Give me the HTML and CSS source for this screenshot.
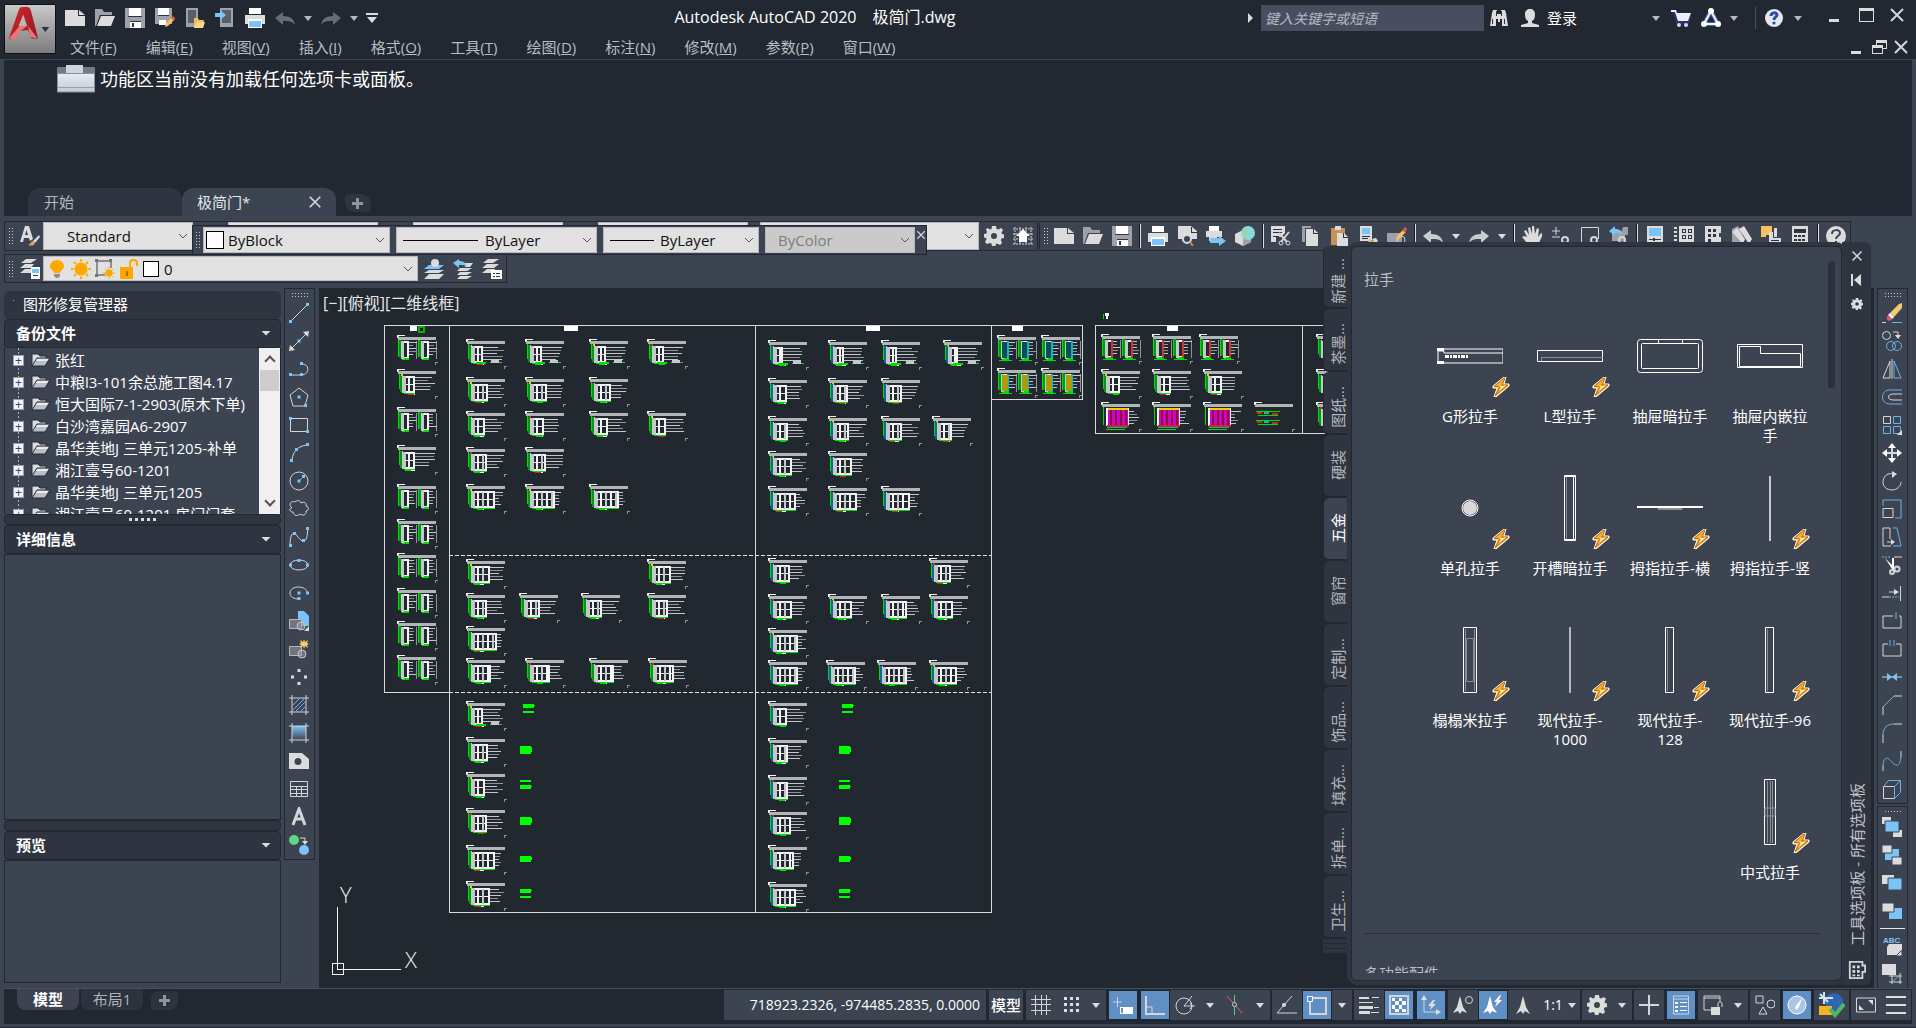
FILE: index.html
```html
<!DOCTYPE html>
<html lang="zh-CN">
<head>
<meta charset="utf-8">
<title>Autodesk AutoCAD 2020 极简门.dwg</title>
<link rel="stylesheet" href="styles.css">
</head>
<body>
<svg class="sprite" aria-hidden="true">
  <linearGradient id="g-blue" x1="0" y1="0" x2="0" y2="1"><stop offset="0" stop-color="#7cc4f8"/><stop offset="1" stop-color="#3c4452"/></linearGradient>
  <linearGradient id="g-ribbon" x1="0" y1="0" x2="0" y2="1"><stop offset="0" stop-color="#e8ebf2"/><stop offset="1" stop-color="#c3c9d6"/></linearGradient>
  <linearGradient id="g-red" x1="0" y1="0" x2="1" y2="1"><stop offset="0" stop-color="#d8242c"/><stop offset="1" stop-color="#8d1a20"/></linearGradient>
  <symbol id="i-logo" viewBox="0 0 52 50"><path d="M4 35 14 6Q15 2 18 2h5q3 0 4 4l7 27q1 3-3 2-4 0-5-3l-2-6-9 1-3 7q-1 2-4 1-5 2-4-1z" fill="url(#g-red)"/><path d="M14 22 19 10l4 12z" fill="#b9b9ba"/><path d="M4 35l11-13 9-1-9 7-4 8zM24 22l10 13-8-2z" fill="#e8767a"/><path d="M38 23h8l-4 5z" fill="#2c3340"/></symbol>
  <symbol id="i-new" viewBox="0 0 20 20"><path class="f" d="M0 2h13v6h7v10H0z"/><path class="f" d="M14 2l6 5h-6z"/></symbol>
  <symbol id="i-open" viewBox="0 0 20 20"><path class="g" d="M0 1h7l2 3h8v3H5L1 18H0z"/><path class="f" d="M6 8h14l-4 10H2z"/></symbol>
  <symbol id="i-save" viewBox="0 0 20 20"><path class="g" d="M0 0h20v20H0z"/><path fill="#fff" d="M4 0h12v8H4zM5 14h11v6H5z"/><path class="k" d="M3 8h14v1H3zM7 15h2v4H7zM5 13h11v1H5z"/></symbol>
  <symbol id="i-saveas" viewBox="0 0 20 20"><path class="g" d="M0 0h17v16H0z"/><path fill="#fff" d="M3 0h11v7H3zM4 12h7v5H4z"/><path class="k" d="M3 7h11v1H3z"/><path fill="#f6c25c" d="M10 19l1-4 6-6 3 2-7 7z"/><path fill="#e0524a" d="M16 10l2-2 2 2-1 3z"/></symbol>
  <symbol id="i-mopen" viewBox="0 0 20 20"><path class="g" d="M1 0h12v19H1z"/><path class="k" d="M3 2h8v13H3z" opacity=".6"/><path fill="#f0bb5d" d="M9 10h4l1 2h5l-2 8H9z"/><path fill="#ffd98a" d="M12 14h8l-2 6H9z"/></symbol>
  <symbol id="i-msave" viewBox="0 0 20 20"><path class="g" d="M5 0h13v19H5z"/><path class="k" d="M7 2h9v13H7z" opacity=".6"/><path class="b" d="M0 5h5V2l6 5-6 5V9H0z"/></symbol>
  <symbol id="i-print" viewBox="0 0 20 20"><path fill="#fff" d="M4 0h12v6H4z"/><path class="f" d="M0 7h20v9h-3v-4H3v4H0z"/><path fill="#fff" d="M3 11h14v9H3z"/><path class="b" d="M4 13h12v6H4z"/></symbol>
  <symbol id="i-undo" viewBox="0 0 20 20"><path fill="currentColor" d="M0 10 8 4v4c7 0 11 3 12 9-3-4-6-4-12-4v4z"/></symbol>
  <symbol id="i-redo" viewBox="0 0 20 20"><path fill="currentColor" d="M20 10 12 4v4C5 8 1 11 0 17c3-4 6-4 12-4v4z"/></symbol>
  <symbol id="i-caret" viewBox="0 0 10 10"><path fill="currentColor" d="M1 3h8L5 8z"/></symbol>
  <symbol id="i-cust" viewBox="0 0 12 12"><path class="f" d="M0 1h12v2H0zM1 5h10l-5 6z"/></symbol>
  <symbol id="i-binoc" viewBox="0 0 20 20"><path class="f" d="M4 2h4v4h4V2h4l1 3 2 13h-6v-7h-2v3H9v-3H7v7H1L3 5z"/><path class="k" d="M3 11h1v5H3zM15 11h1v5h-1zM7 3h1v5H7zM12 3h1v5h-1z"/></symbol>
  <symbol id="i-user" viewBox="0 0 20 20"><path class="f" d="M10 1c3 0 5 2 5 5 0 4-1 6-3 7v2l7 2v2H1v-2l7-2v-2C6 12 5 10 5 6c0-3 2-5 5-5z"/></symbol>
  <symbol id="i-cart" viewBox="0 0 20 20"><path fill="none" stroke="#23366f" stroke-width="4" d="M1 4h3l3 10h9l3-7"/><path fill="#eef" d="M0 2h5l1 3h14l-3 8H7L4 4H0z"/><circle cx="8" cy="17" r="2" fill="#cfd8f2"/><circle cx="15" cy="17" r="2" fill="#cfd8f2"/></symbol>
  <symbol id="i-apps" viewBox="0 0 20 20"><path fill="none" stroke="#4a69b5" stroke-width="4" d="M10 3 3 16h14z"/><path fill="none" stroke="#f1f3fb" stroke-width="2" d="M10 3 3 16h14z"/><circle cx="10" cy="3" r="3" fill="#fff"/><circle cx="3" cy="16" r="3" fill="#fff"/><circle cx="17" cy="16" r="3" fill="#fff"/></symbol>
  <symbol id="i-help" viewBox="0 0 20 20"><circle cx="10" cy="10" r="9" fill="#e4e7ee"/><path fill="none" stroke="#2d4f9e" stroke-width="3" d="M7 8c0-4 6-4 6-1 0 2-3 2-3 5"/><circle cx="10" cy="15" r="1.600" fill="#2d4f9e"/></symbol>
  <symbol id="i-min" viewBox="0 0 16 16"><path class="f" d="M2 12h10v3H2z"/></symbol>
  <symbol id="i-max" viewBox="0 0 16 16"><path class="f" fill-rule="evenodd" d="M1 1h15v14H1zM2 4v10h13V4z"/></symbol>
  <symbol id="i-rest" viewBox="0 0 16 16"><path class="f" fill-rule="evenodd" d="M5 1h11v9h-4v5H1V6h4zM6 4v2h6v3h3V4zM2 9v5h9V9z"/></symbol>
  <symbol id="i-x" viewBox="0 0 16 16"><path class="s w2" d="M2 2l12 12M14 2 2 14"/></symbol>
  <symbol id="i-rib" viewBox="0 0 38 28"><path fill="#75798a" d="M0 2h38v8H0z"/><path fill="#cfd4df" d="M9 0h17v8H9z"/><path fill="url(#g-ribbon)" stroke="#8a90a0" d="M.5 8.500h37V27H.5z"/><path fill="#9aa0ae" d="M1 22h36v1H1z"/></symbol>
  <symbol id="i-plus" viewBox="0 0 12 12"><path fill="#8f949d" d="M4 1h3v4h4v3H7v4H4V8H0V5h4z"/></symbol>
  <symbol id="i-astyle" viewBox="0 0 20 20"><path class="f" fill-rule="evenodd" d="M0 16 5 0h4l4 13-3 2-1-3H4l-1 4zM5 9h3L6.500 4z"/><path class="f" d="M19 9l1 2-5 6-2-2z"/><path fill="#d8a362" d="M8 19c2 0 2-3 5-4l2 2c-1 3-4 3-7 2z"/></symbol>
  <symbol id="i-gear" viewBox="0 0 20 20"><path class="f" fill-rule="evenodd" d="M8 0h4l.6 3 1.400.6L17 2l2 2-1.600 3 .6 1 2 .5v3.500l-2.500.6-.6 1.400L18 17l-2 2-3-1.600-1 .6-.6 2H8l-.6-2.400-1.400-.6L3 18l-2-2 1.600-3L2 12l-2-.5V8l2.400-.6L3 6 2 3.500 3.500 2 6 3.600 7.500 3zM10 7a3 3 0 100 6 3 3 0 000-6z"/></symbol>
  <symbol id="i-ghome" viewBox="0 0 20 20"><path class="s" stroke-dasharray="2 1" d="M2 1v18M7 1v18M13 1v18M18 1v18M0 3h20M0 8h20M0 13h20M0 18h20"/><path fill="#fff" d="M10 3l7 7h-3v6H6v-6H3z"/></symbol>
  <symbol id="i-preview" viewBox="0 0 20 20"><path class="f" d="M1 0h13l6 5v8H1z"/><path class="k" d="M14 1h1v5h5v1h-6z"/><circle cx="10" cy="13" r="4" fill="#3c4452" stroke="#dcdcdc" stroke-width="2"/><path stroke="#c58b51" stroke-width="2" d="M13 16l3 4"/></symbol>
  <symbol id="i-publish" viewBox="0 0 20 20"><path fill="#fff" d="M3 0h10v5H3z"/><path class="f" d="M0 5h16v6H0z"/><path class="f" d="M3 9h8v6H3z"/><path class="b" d="M4 12h9v-2l7 5-7 5v-3H4z"/></symbol>
  <symbol id="i-3dp" viewBox="0 0 20 20"><path class="f" d="M0 8l8-4 8 4v8l-8 4-8-4z"/><path class="g" d="M8 12l8-4v8l-8 4z"/><circle cx="13" cy="7" r="7" fill="#7de0e6"/><path fill="none" stroke="#f0b24f" d="M13 0c-4 4-4 10 0 14M7 4c4 4 8 5 12 3"/></symbol>
  <symbol id="i-cut" viewBox="0 0 20 20"><path class="f" d="M0 0h14v7l-4 4H5v5H0z"/><path class="k" d="M2 3h9v1H2zM2 6h9v1H2zM2 10h6v1H2z"/><path class="s w2" d="M8 7l8 9M18 6l-8 10"/><circle cx="10" cy="17" r="2" class="s"/><circle cx="17" cy="17" r="2" class="s"/></symbol>
  <symbol id="i-copyc" viewBox="0 0 20 20"><path class="g" d="M2 0h9v2H5v14H2z"/><path class="f" d="M6 3h8l4 4v13H6z"/><path class="k" d="M13 3h1v4h4v1h-5z"/></symbol>
  <symbol id="i-paste" viewBox="0 0 20 20"><path fill="#c79257" d="M2 2h14v17H2z"/><path class="f" d="M6 0h6v4H6zM8 7h7l4 4v9H8z"/><path class="k" d="M14 7h1v4h4v1h-5z"/></symbol>
  <symbol id="i-match" viewBox="0 0 20 20"><path class="f" d="M2 0h12v15H2z"/><path class="b" d="M4 2h8v6H4z"/><path class="k" d="M4 10h8v1H4zM4 12h6v1H4z"/><path fill="#e5b45c" d="M8 19l4-6 4 3-2 4z"/><path class="f" d="M14 13l4-1 2 3-3 3z"/></symbol>
  <symbol id="i-bedit" viewBox="0 0 20 20"><path class="g" d="M0 7h15v9H0z"/><circle cx="14" cy="14" r="4" class="s"/><path fill="#f6c25c" d="M9 14l1-4 6-6 3 2-7 7z"/><path fill="#e0524a" d="M15 4l3-3 2 2-2 4z"/></symbol>
  <symbol id="i-hand" viewBox="0 0 20 20"><path class="f" d="M5 11 2 5l2-1 3 5-1-7 2-1 2 7V0h2l1 8 2-6 2 1-1 8 3-4 2 1-4 9-3 4H8l-3-4-5-6 2-1z"/></symbol>
  <symbol id="i-zrt" viewBox="0 0 20 20"><path class="s" d="M1 5h8M5 1v8M1 11h8"/><circle cx="14" cy="14" r="3" class="s w2"/><path class="s" d="M16 17l3 3"/></symbol>
  <symbol id="i-zwin" viewBox="0 0 20 20"><path class="s" d="M10 18H1.500V1.500h17V13"/><circle cx="14" cy="14" r="3" class="s w2"/><path class="s" d="M16 17l3 3"/></symbol>
  <symbol id="i-zprev" viewBox="0 0 20 20"><path class="g" d="M3 7h9l2-6h5v8h-3v6H3z"/><path class="b" d="M0 5l6-5v3c5 0 7 2 8 6-2-2-4-2-8-2v3z"/><circle cx="13" cy="14" r="3" class="s w2"/></symbol>
  <symbol id="i-props" viewBox="0 0 20 20"><path class="f" d="M2 0h16v20H2z"/><path class="b" d="M4 2h12v8H4z"/><path class="k" d="M4 13h12v1H4zM8 12h2v3H8z"/></symbol>
  <symbol id="i-dc" viewBox="0 0 20 20"><path class="f" d="M0 1h3v2H0zM0 5h3v2H0zM0 9h3v2H0zM0 13h3v2H0zM5 0h15v20H5z"/><path class="k" d="M8 3h4v4H8zM14 3h4v4h-4zM8 9h4v4H8zM14 9h4v4h-4z"/><path class="f" d="M9 4h2v2H9zM15 4h2v2h-2zM9 10h2v2H9zM15 10h2v2h-2z"/></symbol>
  <symbol id="i-tp" viewBox="0 0 20 20"><path class="f" d="M2 0h16v7h-2v4h2v9H2z"/><path class="k" d="M5 3h3v3H5zM10 3h3v3h-3zM5 8h3v3H5zM10 8h3v3h-3zM5 13h3v3H5z"/></symbol>
  <symbol id="i-ssm" viewBox="0 0 20 20"><path class="g" d="M0 3l6-3 3 4 3 12H0z"/><path class="f" d="M0 6l5-4 8 11-2 5zM7 3l5-3 8 13-3 5z"/></symbol>
  <symbol id="i-mark" viewBox="0 0 20 20"><path fill="#f6c25c" d="M0 0h11v9H5v2H0z"/><path class="f" d="M8 6h4v8H8zM13 2h3v9h-3zM8 12h12v8H8z"/><path class="k" d="M10 14h8v1h-8z"/></symbol>
  <symbol id="i-calc" viewBox="0 0 20 20"><path class="f" d="M2 0h16v20H2z"/><path class="k" d="M4 3h12v4H4zM4 9h3v2H4zM8 9h3v2H8zM12 9h3v2h-3zM4 13h3v2H4zM8 13h3v2H8zM12 13h3v2h-3z"/></symbol>
  <symbol id="i-help2" viewBox="0 0 20 20"><circle cx="10" cy="10" r="10" class="f"/><path fill="none" stroke="#3c4452" stroke-width="2" d="M6 8c0-5 8-5 8-1 0 3-4 3-4 6M10 15v2"/></symbol>
  <symbol id="i-layers" viewBox="0 0 20 20"><path class="f" d="M6 0h11l-6 4H1zM5 5h9l-3 4H0zM5 10h6v4H0z"/><path fill="#fff" d="M11 8h9v12h-9z"/><path class="b" d="M12 10h7v4h-7z"/><path class="k" d="M13 16h5v1h-5z"/></symbol>
  <symbol id="i-lay1" viewBox="0 0 20 20"><path class="f" d="M5 11h15l-5 3H0zM5 15h15l-5 5H0z"/><path class="b" d="M5 6h15l-5 4H0z"/><circle cx="11" cy="4" r="4" class="f"/></symbol>
  <symbol id="i-lay2" viewBox="0 0 20 20"><path class="f" d="M7 9h12l-5 3H4zM7 13h12l-5 3H4zM7 17h12l-5 3H4zM12 4h8l-3 4h-5z"/><path class="b" d="M0 4l6-4v2c5 0 7 2 8 6-2-2-4-2-8-2v3z"/></symbol>
  <symbol id="i-lay3" viewBox="0 0 20 20"><path class="f" d="M6 0h11l-6 4H1zM5 5h12l-5 4H0zM5 10h8v4H0z"/><path fill="#fff" d="M9 11h11v9H9z"/><path class="k" d="M11 14h2v1h-2zM14 14h4v1h-4zM11 17h2v1h-2zM14 17h4v1h-4z"/></symbol>
  <symbol id="i-bulb" viewBox="0 0 20 20"><path fill="#ffa900" d="M10 1c4 0 7 3 7 6s-3 4-4 7H7c-1-3-4-4-4-7s3-6 7-6z"/><path fill="#8a8d92" d="M7 15h6v2l-2 2H9l-2-2z"/></symbol>
  <symbol id="i-sun" viewBox="0 0 20 20"><path stroke="#ffa900" stroke-width="2" d="M10 0v20M0 10h20M3 3l14 14M17 3 3 17"/><circle cx="10" cy="10" r="7" fill="#ffa900" stroke="#e1e1e1"/></symbol>
  <symbol id="i-vpf" viewBox="0 0 20 20"><path fill="none" stroke="#8a8d92" stroke-width="2" d="M10 16H2V2h14v7"/><path fill="#6f737a" d="M0 0h3v3H0zM14 0h3v3h-3zM0 15h3v3H0z"/><path stroke="#ffa900" d="M14 8v12M8 14h12M10 10l8 8M18 10l-8 8"/><circle cx="14" cy="14" r="3.500" fill="#ffa900"/></symbol>
  <symbol id="i-lock" viewBox="0 0 20 20"><path fill="#ffa900" d="M1 8h13v12H1z"/><path fill="none" stroke="#ffa900" stroke-width="2" d="M11 8V4c0-4 7-4 7 0v3"/><path fill="#a86f00" d="M7 12h2v5H7z"/></symbol>
  <symbol id="i-folder" viewBox="0 0 20 14"><path fill="#d9dbe0" stroke="#262b34" d="M1 13V1h6l2 2h6v3"/><path fill="#b9bec8" stroke="#262b34" d="M1 13 6 5h13l-5 8z"/><path fill="#e9ebef" d="M6 6h11l-1 2H5z"/></symbol>
  <symbol id="i-line" viewBox="0 0 20 20"><path class="s" d="M2 18 18 2"/><path class="b" d="M0 17h3v3H0zM17 0h3v3h-3z"/></symbol>
  <symbol id="i-ray" viewBox="0 0 20 20"><path class="s" d="M2 18 18 2"/><path class="f" d="M20 0l-1 6-5-5zM0 20l1-6 5 5z"/><path class="b" d="M8.500 8.500h3v3h-3z"/></symbol>
  <symbol id="i-pline" viewBox="0 0 20 20"><path class="s" d="M1 16h11c9 0 9-11 1-11"/><path class="b" d="M0 14h3v3H0zM11 14h3v3h-3zM11 3h3v3h-3z"/></symbol>
  <symbol id="i-poly" viewBox="0 0 20 20"><path class="s" d="M10 1l9 7-3 11H4L1 8z"/><path class="b" d="M8.500 8.500h3v3h-3zM15 17h3v3h-3z"/></symbol>
  <symbol id="i-rect" viewBox="0 0 20 20"><path class="s" d="M1.500 3.500h17v13h-17z"/><path class="b" d="M0 2h3v3H0zM17 15h3v3h-3z"/></symbol>
  <symbol id="i-arc" viewBox="0 0 20 20"><path class="s" d="M3 17C4 8 9 3 18 2"/><path class="b" d="M1 16h3v3H1zM17 0h3v3h-3zM6 5h3v3H6z"/></symbol>
  <symbol id="i-circle" viewBox="0 0 20 20"><circle cx="10" cy="10" r="9" class="s"/><path class="sb" d="M10 10l5-5"/><path class="b" d="M8.500 8.500h3v3h-3zM13 4h3v3h-3z"/></symbol>
  <symbol id="i-cloud" viewBox="0 0 20 20"><path class="s" d="M3 9c-4-3-1-8 3-6 2-2 5-2 6 1 3-2 6 0 5 3 3 0 3 5 0 5 1 4-4 5-6 3-3 3-7 1-7-2-4 0-4-4-1-4z"/></symbol>
  <symbol id="i-spline" viewBox="0 0 20 20"><path class="s" d="M1 18C1 10 3 6 5 6s6 9 10 8 3-9 4-12"/><path class="b" d="M0 17h3v3H0zM4 5h3v3H4zM13 12h3v3h-3zM17 0h3v3h-3z"/></symbol>
  <symbol id="i-ell" viewBox="0 0 20 20"><ellipse cx="10" cy="10" rx="9" ry="5" class="s"/><path class="b" d="M0 8.500h3v3H0zM17 8.500h3v3h-3zM8.500 4h3v3h-3z"/></symbol>
  <symbol id="i-earc" viewBox="0 0 20 20"><path class="s" d="M18 10C18 2 1 2 1 10c0 4 4 6 9 6"/><path class="b" d="M8.500 8.500h3v3h-3zM17 8.500h3v3h-3zM8.500 14h3v3h-3z"/></symbol>
  <symbol id="i-insert" viewBox="0 0 20 20"><path class="b" d="M9 0h6l5 5v10H9z"/><path fill="#71757e" stroke="#b4b7bc" d="M.5 8.500h12v9H.5z"/><circle cx="12" cy="15" r="4" fill="#9ea1a7" fill-opacity=".5" stroke="#c5c7cb"/><path class="f" d="M20 15v5h-5z"/></symbol>
  <symbol id="i-block" viewBox="0 0 20 20"><path fill="#71757e" stroke="#b4b7bc" d="M.5 7.500h12v9H.5z"/><circle cx="13" cy="15" r="4" fill="#9ea1a7" fill-opacity=".5" stroke="#c5c7cb"/><path fill="#f6c96b" d="M15 0l1 3 3-2-1 3 2 1-2 1 1 3-3-2-1 3-1-3-3 2 1-3-2-1 2-1-1-3 3 2z"/></symbol>
  <symbol id="i-point" viewBox="0 0 20 20"><path class="f" d="M8.500 2h3v3h-3zM2 8.500h3v3H2zM15 8.500h3v3h-3zM8.500 15h3v3h-3z"/></symbol>
  <symbol id="i-hatch" viewBox="0 0 20 20"><path class="s" d="M3 0v20M17 0v20M0 3h20M0 17h20"/><path class="sb" d="M4 10l6-6M4 15 15 4M7 16l9-9M12 16l4-4"/></symbol>
  <symbol id="i-grad" viewBox="0 0 20 20"><path fill="url(#g-blue)" d="M3 3h14v14H3z"/><path class="s" d="M3 0v20M17 0v20M0 3h20M0 17h20"/></symbol>
  <symbol id="i-region" viewBox="0 0 20 20"><path class="f" fill-rule="evenodd" d="M0 2h13l7 6v10H0zM9 7a3.500 3.500 0 100 7 3.500 3.500 0 000-7z"/></symbol>
  <symbol id="i-table" viewBox="0 0 20 20"><path class="s" d="M1.500 2.500h17v15h-17zM1 7.500h18M1 10.500h18M1 14.500h18M7.500 7v10M12.500 7v10"/></symbol>
  <symbol id="i-text" viewBox="0 0 20 20"><path class="s" stroke-width="3" d="M4 18l6-16 6 16M6 12h8"/></symbol>
  <symbol id="i-addsel" viewBox="0 0 20 20"><circle cx="5" cy="5" r="5" fill="#62d687"/><circle cx="15" cy="15" r="5" class="b"/><path class="s" d="M11 3h5v4"/><path class="f" d="M13 6h6l-3 4z"/></symbol>
  <symbol id="i-erase" viewBox="0 0 20 20"><path fill="#f6c96b" d="M17 1l3-1v5l-8 9-4-4z"/><path fill="#fff" d="M8 10l4 4-2 2-4-4z"/><path fill="#e85a63" d="M6 12l4 4c-2 3-6 2-5-2z"/><path class="s" d="M0 19.500h4"/><path class="sb" d="M10 19.500h10"/></symbol>
  <symbol id="i-copy" viewBox="0 0 20 20"><circle cx="4.500" cy="4.500" r="4" class="s"/><path class="s" d="M11 1h5v4"/><path class="f" d="M13 4h6l-3 4z"/><circle cx="9" cy="15" r="4.500" class="sb"/><circle cx="15" cy="15" r="4.500" class="sb"/></symbol>
  <symbol id="i-mirror" viewBox="0 0 20 20"><path class="s" d="M8 2v17H1zM10 0v20"/><path class="sb" d="M12 2v17h7z"/></symbol>
  <symbol id="i-offset" viewBox="0 0 20 20"><path class="sb" d="M20 3H8c-10 0-10 14 0 14h12"/><path class="s" d="M20 7h-9c-6 0-6 6 0 6h9"/></symbol>
  <symbol id="i-array" viewBox="0 0 20 20"><path class="s" d="M1.500 1.500h7v7h-7z"/><path class="sb" d="M11.500 1.500h7v7h-7zM1.500 11.500h7v7h-7zM11.500 11.500h7v7h-7z"/><path class="f" d="M20 15v5h-5z"/></symbol>
  <symbol id="i-move" viewBox="0 0 20 20"><path class="s w2" d="M10 3v14M3 10h14"/><path fill="#fff" d="M10 0l4 5H6zM10 20l4-5H6zM0 10l5-4v8zM20 10l-5-4v8z"/></symbol>
  <symbol id="i-rotate" viewBox="0 0 20 20"><path class="s" d="M12 3C4 1 1 7 1 11c0 5 4 8 9 8s9-4 9-8"/><path class="f" d="M10 0l5 3-5 4z"/></symbol>
  <symbol id="i-scale" viewBox="0 0 20 20"><path class="sb" d="M1 7V1h18v18h-6"/><path class="s" d="M1 9.500h10v9H1z"/></symbol>
  <symbol id="i-stretch" viewBox="0 0 20 20"><path class="s" d="M8 12V1H1v18h8M5 15h5"/><path class="f" d="M9 12l4 3-4 3z"/><path class="sb" d="M11 1h4l4 18h-8"/></symbol>
  <symbol id="i-trim" viewBox="0 0 20 20"><path class="sb" stroke-dasharray="2 1" d="M0 2h9"/><path class="s" d="M12 2h8"/><path fill="#fff" d="M3 3l9 9-2 2zM10 3h2v12h-2z"/><circle cx="10" cy="17" r="2" class="s w2"/><circle cx="15" cy="14" r="2.500" class="s w2"/></symbol>
  <symbol id="i-extend" viewBox="0 0 20 20"><path class="s" d="M0 14h7M18.500 3v15M7 9h6"/><path class="f" d="M12 6l5 3-5 3z"/><path class="sb" stroke-dasharray="2 1" d="M7 14h10"/></symbol>
  <symbol id="i-brkpt" viewBox="0 0 20 20"><path class="s" d="M11 5H1v12h18V5h-2"/><path class="sb" d="M14 1v7"/></symbol>
  <symbol id="i-break" viewBox="0 0 20 20"><path class="s" d="M6 5H1v12h18V5h-5"/><path class="sb" d="M8 1v6M12 1v6"/></symbol>
  <symbol id="i-join" viewBox="0 0 20 20"><path class="s" d="M0 10h20"/><path class="b" d="M5 6l5 4-5 4zM15 6l-5 4 5 4z"/></symbol>
  <symbol id="i-chamfer" viewBox="0 0 20 20"><path class="s" d="M1 20v-8M12 1h8"/><path class="sb" d="M1 12 12 1"/></symbol>
  <symbol id="i-fillet" viewBox="0 0 20 20"><path class="s" d="M1 20v-8M12 1h8"/><path class="sb" d="M1 12C1 5 5 1 12 1"/></symbol>
  <symbol id="i-blend" viewBox="0 0 20 20"><path class="s" d="M1 20v-6M19 0v6"/><path class="sb" d="M1 14C2 4 7 7 10 11s8 6 9-5"/></symbol>
  <symbol id="i-box" viewBox="0 0 20 20"><path class="s" d="M1.500 7.500h11v12h-11z"/><path class="sb" d="M1.500 7.500l5-6h12l-6 6M18.500 1.500v12l-6 6M12.500 7.500v12"/></symbol>
  <symbol id="i-o1" viewBox="0 0 20 20"><path class="f" d="M0 0h9v7H0zM11 13h9v7h-9z"/><path class="b" stroke="#3c4452" d="M3 4h14v11H3z"/></symbol>
  <symbol id="i-o2" viewBox="0 0 20 20"><path class="b" d="M3 4h14v11H3z"/><path class="f" stroke="#3c4452" d="M0 0h10v8H0zM10 12h10v8H10z"/></symbol>
  <symbol id="i-o3" viewBox="0 0 20 20"><path class="f" d="M0 2h12v9H0z"/><path class="b" stroke="#3c4452" d="M6 5h14v12H6z"/></symbol>
  <symbol id="i-o4" viewBox="0 0 20 20"><path class="b" d="M7 7h13v11H7z"/><path class="f" stroke="#3c4452" d="M0 2h12v9H0z"/></symbol>
  <symbol id="i-o5" viewBox="0 0 20 20"><text x="1" y="7" class="mini">ABC</text><path class="f" d="M5 11l2-3h13v11H5z"/><path class="f" stroke="#3c4452" d="M20 14v6h-6z"/></symbol>
  <symbol id="i-o6" viewBox="0 0 20 20"><path class="f" d="M0 0h14v11H0z"/><path class="s" d="M10 9v11M18 9v11M7 12h13M7 18h13"/><path class="sb" d="M11 17l6-5"/></symbol>
  <symbol id="i-pin" viewBox="0 0 12 12"><path class="f" d="M0 0h2v12H0zM10 0v12L3 6z"/></symbol>
  <symbol id="i-pals" viewBox="0 0 20 20"><path class="s w2" d="M2 1h14v4h3v7h-3v7H2z"/><path class="f" d="M5 5h3v3H5zM10 5h3v3h-3zM5 10h3v3H5zM10 10h3v3h-3zM5 15h3v2H5zM10 15h3v2h-3z"/></symbol>
  <symbol id="i-bolt" viewBox="0 0 20 20"><path fill="#f6c45a" stroke="#fff" d="M13 0 2 9v2h4L3 20h2l13-11V7h-5l2-7z"/><path fill="#f4b32e" stroke="#c2661b" d="M13 1 3 9.500h6L4 18.500 17 8h-6l3-7z"/><path fill="#fff8c0" d="M7 9h5l3-1-7 6 2-4z"/></symbol>
  <symbol id="i-grid" viewBox="0 0 20 20"><path class="s" d="M4.500 0v20M10.500 0v20M15.500 0v20M0 4.500h20M0 9.500h20M0 15.500h20"/></symbol>
  <symbol id="i-snap" viewBox="0 0 20 20"><path class="f" d="M3 2h3v3H3zM9 2h3v3H9zM15 2h3v3h-3zM3 8h3v3H3zM9 8h3v3H9zM15 8h3v3h-3zM3 14h3v3H3zM9 14h3v3H9zM15 14h3v3h-3z"/></symbol>
  <symbol id="i-dyn" viewBox="0 0 20 20"><path class="s" d="M0 7h9M4.500 2v10"/><path fill="#fff" d="M7 12h13v7H7z"/><path fill="#5f8fc4" d="M8 13h2v5H8z"/></symbol>
  <symbol id="i-ortho" viewBox="0 0 20 20"><path class="s w2" d="M1 1v18h19"/><path class="s" d="M1 12h6v7"/></symbol>
  <symbol id="i-polar" viewBox="0 0 20 20"><circle cx="9" cy="11" r="8" class="s"/><path class="s" d="M9 11 17 1M9 11h11M15 8l2 3-2 3"/></symbol>
  <symbol id="i-iso" viewBox="0 0 20 20"><path stroke="#d96a6a" d="M2 1l15 17"/><path stroke="#5fc888" d="M9.500 0v20"/><circle cx="9.500" cy="9.500" r="2" fill="#3c4452" stroke="#ccc"/></symbol>
  <symbol id="i-track" viewBox="0 0 20 20"><path class="s" d="M0 18h20M0 18 15 1"/><circle cx="7" cy="10" r="2" class="f"/></symbol>
  <symbol id="i-osnap" viewBox="0 0 20 20"><path class="s w2" d="M3 3h16v16H3z"/><path fill="#5f8fc4" stroke="#fff" d="M.5 1.500h5v5h-5z"/></symbol>
  <symbol id="i-lw" viewBox="0 0 20 20"><path class="f" d="M0 2h10v2H0zM13 2h7v1h-7zM0 7h14v1H0zM0 11h14v3H0zM15 12h5v1h-5zM0 16h11v3H0zM12 17h8v1h-8z"/></symbol>
  <symbol id="i-trans" viewBox="0 0 20 20"><path class="s w2" d="M1 1h18v18H1z"/><path fill="#fff" d="M3 3h3v3H3zM10 3h3v3h-3zM6 6h4v4H6zM13 6h4v4h-4zM3 10h3v4H3zM10 10h3v4h-3zM6 14h4v3H6zM13 14h4v3h-4z"/></symbol>
  <symbol id="i-ducs" viewBox="0 0 20 20"><path class="s" d="M3 3v14h14"/><path class="f" d="M3 0l3 5H0zM20 17l-5-3v6zM12 5l-5 6h3l-1 4 6-6h-3l2-4z"/></symbol>
  <symbol id="i-ann1" viewBox="0 0 20 20"><path class="f" d="M7 1l3 11 4 6-5-2-2 3-2-3-5 2 4-6z"/><circle cx="16" cy="5" r="3.500" class="s"/></symbol>
  <symbol id="i-ann2" viewBox="0 0 20 20"><path fill="#fff" d="M7 1l3 11 4 6-5-2-2 3-2-3-5 2 4-6zM17 0l-6 7h3l-2 5 7-7h-3l2-5z"/></symbol>
  <symbol id="i-ann3" viewBox="0 0 20 20"><path class="f" d="M10 1l3 11 4 7-5-3-2 3-2-3-5 3 4-7z"/></symbol>
  <symbol id="i-add" viewBox="0 0 20 20"><path class="s w2" d="M10 0v20M0 10h20"/></symbol>
  <symbol id="i-qp" viewBox="0 0 20 20"><path class="s" d="M2.500 1h15v18h-15zM2 4h16"/><path fill="#fff" d="M4 7h3v2H4zM4 11h3v2H4zM4 15h3v2H4zM9 7h7v1H9zM9 11h7v1H9zM9 15h7v1H9z"/></symbol>
  <symbol id="i-uilock" viewBox="0 0 20 20"><path class="s" d="M9 15H1V1h16v6M1 3h16"/><path class="f" d="M8 12h9v8H8z"/><path class="s" d="M15 12V9c0-3 4-3 4 0v3"/></symbol>
  <symbol id="i-isol" viewBox="0 0 20 20"><path class="s" d="M1 1h7v7H1zM4 19l4-7 4 7z"/><circle cx="16" cy="9" r="4" class="s"/></symbol>
  <symbol id="i-hw" viewBox="0 0 20 20"><circle cx="10" cy="10" r="9" fill="#a9c6e6" stroke="#fff"/><path fill="#fff" d="M15 3l-3 9-3 3-1-3z"/></symbol>
  <symbol id="i-cal" viewBox="0 0 26 26"><circle cx="15" cy="10" r="9" fill="#2f66b0"/><path stroke="#cfe4fa" stroke-width="2" d="M5 0v12M0 6h14M1 2l8 8"/><path fill="#f5b324" d="M0 14h13v9H0z"/><path fill="none" stroke="#52b561" stroke-width="4" d="M11 17l5 6 9-11"/></symbol>
  <symbol id="i-full" viewBox="0 0 20 20"><path class="s" d="M.5 3h19v14H.5z"/><path class="f" d="M17 5v5l-5-5zM3 15v-5l5 5z"/></symbol>
  <symbol id="i-menu" viewBox="0 0 20 20"><path class="f" d="M0 1h20v2H0zM0 9h20v2H0zM0 17h20v2H0z"/></symbol>
</svg>

<header class="header">
  <button class="logo" aria-label="应用程序菜单"><svg><use href="#i-logo"/></svg></button>
  <div class="headrows">
    <div class="titlerow">
      <div class="qat">
        <button aria-label="新建"><svg><use href="#i-new"/></svg></button>
        <button aria-label="打开"><svg><use href="#i-open"/></svg></button>
        <button aria-label="保存"><svg><use href="#i-save"/></svg></button>
        <button aria-label="另存为"><svg><use href="#i-saveas"/></svg></button>
        <button aria-label="从移动设备打开"><svg><use href="#i-mopen"/></svg></button>
        <button aria-label="保存到移动设备"><svg><use href="#i-msave"/></svg></button>
        <button aria-label="打印"><svg><use href="#i-print"/></svg></button>
        <button class="dim" aria-label="放弃"><svg><use href="#i-undo"/></svg></button>
        <button class="car" aria-label="放弃列表"><svg><use href="#i-caret"/></svg></button>
        <button class="dim" aria-label="重做"><svg><use href="#i-redo"/></svg></button>
        <button class="car" aria-label="重做列表"><svg><use href="#i-caret"/></svg></button>
        <button class="cust" aria-label="自定义"><svg><use href="#i-cust"/></svg></button>
      </div>
      <h1 class="title"><span>Autodesk AutoCAD 2020</span><span>极简门.dwg</span></h1>
      <div class="info">
        <span class="tri"></span>
        <input type="text" aria-label="搜索" placeholder="键入关键字或短语">
        <button aria-label="查找"><svg><use href="#i-binoc"/></svg></button>
        <button class="login"><svg><use href="#i-user"/></svg>登录</button>
        <button class="car" aria-label="登录选项"><svg><use href="#i-caret"/></svg></button>
        <button aria-label="购物车"><svg><use href="#i-cart"/></svg></button>
        <button aria-label="应用"><svg><use href="#i-apps"/></svg></button>
        <button class="car" aria-label="应用选项"><svg><use href="#i-caret"/></svg></button>
        <span class="rule"></span>
        <button aria-label="帮助"><svg><use href="#i-help"/></svg></button>
        <button class="car" aria-label="帮助选项"><svg><use href="#i-caret"/></svg></button>
      </div>
      <div class="win">
        <button aria-label="最小化"><svg><use href="#i-min"/></svg></button>
        <button aria-label="最大化"><svg><use href="#i-max"/></svg></button>
        <button aria-label="关闭"><svg><use href="#i-x"/></svg></button>
      </div>
    </div>
    <div class="menurow">
      <nav class="menu">
        <button>文件(<u>F</u>)</button><button>编辑(<u>E</u>)</button><button>视图(<u>V</u>)</button><button>插入(<u>I</u>)</button><button>格式(<u>O</u>)</button><button>工具(<u>T</u>)</button><button>绘图(<u>D</u>)</button><button>标注(<u>N</u>)</button><button>修改(<u>M</u>)</button><button>参数(<u>P</u>)</button><button>窗口(<u>W</u>)</button>
      </nav>
      <div class="win doc">
        <button aria-label="最小化文档"><svg><use href="#i-min"/></svg></button>
        <button aria-label="还原文档"><svg><use href="#i-rest"/></svg></button>
        <button aria-label="关闭文档"><svg><use href="#i-x"/></svg></button>
      </div>
    </div>
  </div>
</header>

<div class="frame">
  <section class="ribbon">
    <p><svg><use href="#i-rib"/></svg>功能区当前没有加载任何选项卡或面板。</p>
    <div class="filetabs">
      <button class="ftab">开始</button>
      <button class="ftab on">极简门*<svg><use href="#i-x"/></svg></button>
      <button class="fadd" aria-label="新图形"><svg><use href="#i-plus"/></svg></button>
    </div>
  </section>

  <section class="bars">
    <div class="row">
      <div class="bar">
        <i class="grip"></i>
        <button class="t26" aria-label="文字样式"><svg><use href="#i-astyle"/></svg></button>
        <label class="combo std"><select aria-label="文字样式控制"><option>Standard</option></select></label>
        <label class="combo back"><select aria-label="标注样式控制"><option></option></select></label>
        <label class="combo back"><select aria-label="表格样式控制"><option></option></select></label>
        <label class="combo back"><select aria-label="多重引线样式控制"><option></option></select></label>
        <label class="combo space"><select aria-label="工作空间控制"><option></option></select></label>
        <button aria-label="工作空间设置"><svg><use href="#i-gear"/></svg></button>
        <button aria-label="我的工作空间"><svg><use href="#i-ghome"/></svg></button>
      </div>
      <div class="bar">
        <i class="grip"></i>
        <button aria-label="新建"><svg><use href="#i-new"/></svg></button>
        <button aria-label="打开"><svg><use href="#i-open"/></svg></button>
        <button aria-label="保存"><svg><use href="#i-save"/></svg></button>
        <i class="sep"></i>
        <button aria-label="打印"><svg><use href="#i-print"/></svg></button>
        <button aria-label="打印预览"><svg><use href="#i-preview"/></svg></button>
        <button aria-label="发布"><svg><use href="#i-publish"/></svg></button>
        <button aria-label="三维打印"><svg><use href="#i-3dp"/></svg></button>
        <i class="sep"></i>
        <button aria-label="剪切"><svg><use href="#i-cut"/></svg></button>
        <button aria-label="复制"><svg><use href="#i-copyc"/></svg></button>
        <button aria-label="粘贴"><svg><use href="#i-paste"/></svg></button>
        <button aria-label="特性匹配"><svg><use href="#i-match"/></svg></button>
        <button aria-label="块编辑器"><svg><use href="#i-bedit"/></svg></button>
        <i class="sep"></i>
        <button class="arrow" aria-label="放弃"><svg><use href="#i-undo"/></svg></button>
        <button class="car" aria-label="放弃列表"><svg><use href="#i-caret"/></svg></button>
        <button class="arrow" aria-label="重做"><svg><use href="#i-redo"/></svg></button>
        <button class="car" aria-label="重做列表"><svg><use href="#i-caret"/></svg></button>
        <i class="sep"></i>
        <button aria-label="实时平移"><svg><use href="#i-hand"/></svg></button>
        <button aria-label="实时缩放"><svg><use href="#i-zrt"/></svg></button>
        <button aria-label="窗口缩放"><svg><use href="#i-zwin"/></svg></button>
        <button aria-label="缩放上一个"><svg><use href="#i-zprev"/></svg></button>
        <i class="sep"></i>
        <button aria-label="特性"><svg><use href="#i-props"/></svg></button>
        <button aria-label="设计中心"><svg><use href="#i-dc"/></svg></button>
        <button aria-label="工具选项板"><svg><use href="#i-tp"/></svg></button>
        <button aria-label="图纸集管理器"><svg><use href="#i-ssm"/></svg></button>
        <button aria-label="标记集管理器"><svg><use href="#i-mark"/></svg></button>
        <button aria-label="快速计算器"><svg><use href="#i-calc"/></svg></button>
        <i class="sep"></i>
        <button aria-label="帮助"><svg><use href="#i-help2"/></svg></button>
      </div>
    </div>
    <div class="row">
      <div class="bar">
        <i class="grip"></i>
        <button class="t26" aria-label="图层特性"><svg><use href="#i-layers"/></svg></button>
        <label class="combo layer">
          <svg><use href="#i-bulb"/></svg><svg><use href="#i-sun"/></svg><svg><use href="#i-vpf"/></svg><svg><use href="#i-lock"/></svg>
          <i class="swatch"></i>
          <select aria-label="图层控制"><option>0</option></select>
        </label>
        <button aria-label="置为当前"><svg><use href="#i-lay1"/></svg></button>
        <button aria-label="上一个图层"><svg><use href="#i-lay2"/></svg></button>
        <button aria-label="图层状态"><svg><use href="#i-lay3"/></svg></button>
      </div>
    </div>
  </section>

  <main class="work">
    <aside class="recovery">
      <h2>图形修复管理器</h2>
      <button class="head">备份文件<i></i></button>
      <div class="files">
        <ul>
          <li><button aria-label="展开">+</button><svg><use href="#i-folder"/></svg>张红</li>
          <li><button aria-label="展开">+</button><svg><use href="#i-folder"/></svg>中粮l3-101余总施工图4.17</li>
          <li><button aria-label="展开">+</button><svg><use href="#i-folder"/></svg>恒大国际7-1-2903(原木下单)</li>
          <li><button aria-label="展开">+</button><svg><use href="#i-folder"/></svg>白沙湾嘉园A6-2907</li>
          <li><button aria-label="展开">+</button><svg><use href="#i-folder"/></svg>晶华美地J 三单元1205-补单</li>
          <li><button aria-label="展开">+</button><svg><use href="#i-folder"/></svg>湘江壹号60-1201</li>
          <li><button aria-label="展开">+</button><svg><use href="#i-folder"/></svg>晶华美地J 三单元1205</li>
          <li><button aria-label="展开">+</button><svg><use href="#i-folder"/></svg>湘江壹号60-1201 房门门套</li>
        </ul>
        <div class="scroll"><i class="up"></i><b></b><i class="down"></i></div>
      </div>
      <div class="split"><i></i><i></i><i></i><i></i><i></i></div>
      <button class="head">详细信息<i></i></button>
      <div class="pane details"></div>
      <div class="split"></div>
      <button class="head">预览<i></i></button>
      <div class="pane"></div>
    </aside>

    <div class="vbar">
      <i class="hgrip"></i>
      <button aria-label="直线"><svg><use href="#i-line"/></svg></button>
      <button aria-label="构造线"><svg><use href="#i-ray"/></svg></button>
      <button aria-label="多段线"><svg><use href="#i-pline"/></svg></button>
      <button aria-label="多边形"><svg><use href="#i-poly"/></svg></button>
      <button aria-label="矩形"><svg><use href="#i-rect"/></svg></button>
      <button aria-label="圆弧"><svg><use href="#i-arc"/></svg></button>
      <button aria-label="圆"><svg><use href="#i-circle"/></svg></button>
      <button aria-label="修订云线"><svg><use href="#i-cloud"/></svg></button>
      <button aria-label="样条曲线"><svg><use href="#i-spline"/></svg></button>
      <button aria-label="椭圆"><svg><use href="#i-ell"/></svg></button>
      <button aria-label="椭圆弧"><svg><use href="#i-earc"/></svg></button>
      <button aria-label="插入块"><svg><use href="#i-insert"/></svg></button>
      <button aria-label="创建块"><svg><use href="#i-block"/></svg></button>
      <button aria-label="点"><svg><use href="#i-point"/></svg></button>
      <button aria-label="图案填充"><svg><use href="#i-hatch"/></svg></button>
      <button aria-label="渐变色"><svg><use href="#i-grad"/></svg></button>
      <button aria-label="面域"><svg><use href="#i-region"/></svg></button>
      <button aria-label="表格"><svg><use href="#i-table"/></svg></button>
      <button aria-label="多行文字"><svg><use href="#i-text"/></svg></button>
      <button aria-label="添加选定对象"><svg><use href="#i-addsel"/></svg></button>
    </div>

    <div class="canvas">
      <p class="view">[−][俯视][二维线框]</p>
      <svg id="model" role="img" aria-label="模型空间"></svg>
    </div>

    <div class="right">
      <div class="vbar">
        <i class="hgrip"></i>
        <button aria-label="删除"><svg><use href="#i-erase"/></svg></button>
        <button aria-label="复制"><svg><use href="#i-copy"/></svg></button>
        <button aria-label="镜像"><svg><use href="#i-mirror"/></svg></button>
        <button aria-label="偏移"><svg><use href="#i-offset"/></svg></button>
        <button aria-label="阵列"><svg><use href="#i-array"/></svg></button>
        <button aria-label="移动"><svg><use href="#i-move"/></svg></button>
        <button aria-label="旋转"><svg><use href="#i-rotate"/></svg></button>
        <button aria-label="缩放"><svg><use href="#i-scale"/></svg></button>
        <button aria-label="拉伸"><svg><use href="#i-stretch"/></svg></button>
        <button aria-label="修剪"><svg><use href="#i-trim"/></svg></button>
        <button aria-label="延伸"><svg><use href="#i-extend"/></svg></button>
        <button aria-label="打断于点"><svg><use href="#i-brkpt"/></svg></button>
        <button aria-label="打断"><svg><use href="#i-break"/></svg></button>
        <button aria-label="合并"><svg><use href="#i-join"/></svg></button>
        <button aria-label="倒角"><svg><use href="#i-chamfer"/></svg></button>
        <button aria-label="圆角"><svg><use href="#i-fillet"/></svg></button>
        <button aria-label="光顺曲线"><svg><use href="#i-blend"/></svg></button>
        <button aria-label="分解"><svg><use href="#i-box"/></svg></button>
      </div>
      <div class="vbar">
        <i class="hgrip"></i>
        <button aria-label="前置"><svg><use href="#i-o1"/></svg></button>
        <button aria-label="后置"><svg><use href="#i-o2"/></svg></button>
        <button aria-label="置于对象之上"><svg><use href="#i-o3"/></svg></button>
        <button aria-label="置于对象之下"><svg><use href="#i-o4"/></svg></button>
        <i class="hsep"></i>
        <button aria-label="注释前置"><svg><use href="#i-o5"/></svg></button>
        <button aria-label="图案填充后置"><svg><use href="#i-o6"/></svg></button>
      </div>
    </div>
  </main>

  <footer class="foot">
    <div class="ltabs">
      <button class="on">模型</button><button>布局1</button><button class="add" aria-label="新建布局"><svg><use href="#i-plus"/></svg></button>
    </div>
    <div class="status">
      <button class="coord">718923.2326, -974485.2835, 0.0000</button>
      <button class="space-btn">模型</button>
      <div class="seg"><button aria-label="栅格"><svg><use href="#i-grid"/></svg></button><button aria-label="捕捉"><svg><use href="#i-snap"/></svg></button><button class="car" aria-label="捕捉选项"><svg><use href="#i-caret"/></svg></button></div>
      <div class="seg"><button class="hl" aria-label="动态输入"><svg><use href="#i-dyn"/></svg></button></div>
      <div class="seg"><button class="hl" aria-label="正交"><svg><use href="#i-ortho"/></svg></button><button aria-label="极轴"><svg><use href="#i-polar"/></svg></button><button class="car" aria-label="极轴选项"><svg><use href="#i-caret"/></svg></button><button aria-label="等轴测草图"><svg><use href="#i-iso"/></svg></button><button class="car" aria-label="等轴测选项"><svg><use href="#i-caret"/></svg></button></div>
      <div class="seg"><button aria-label="对象捕捉追踪"><svg><use href="#i-track"/></svg></button><button class="hl" aria-label="对象捕捉"><svg><use href="#i-osnap"/></svg></button><button class="car" aria-label="对象捕捉选项"><svg><use href="#i-caret"/></svg></button></div>
      <div class="seg"><button aria-label="线宽"><svg><use href="#i-lw"/></svg></button><button class="hl" aria-label="透明度"><svg><use href="#i-trans"/></svg></button></div>
      <div class="seg"><button class="hl" aria-label="动态 UCS"><svg><use href="#i-ducs"/></svg></button></div>
      <div class="seg"><button aria-label="注释可见性"><svg><use href="#i-ann1"/></svg></button><button class="hl" aria-label="自动缩放"><svg><use href="#i-ann2"/></svg></button><button aria-label="注释比例"><svg><use href="#i-ann3"/></svg></button><button class="ratio">1:1</button><button class="car" aria-label="比例列表"><svg><use href="#i-caret"/></svg></button></div>
      <div class="seg"><button aria-label="切换工作空间"><svg><use href="#i-gear"/></svg></button><button class="car" aria-label="工作空间列表"><svg><use href="#i-caret"/></svg></button></div>
      <div class="seg"><button aria-label="注释监视器"><svg><use href="#i-add"/></svg></button></div>
      <div class="seg"><button class="hl" aria-label="快捷特性"><svg><use href="#i-qp"/></svg></button></div>
      <div class="seg"><button aria-label="锁定用户界面"><svg><use href="#i-uilock"/></svg></button><button class="car" aria-label="锁定选项"><svg><use href="#i-caret"/></svg></button></div>
      <div class="seg"><button aria-label="隔离对象"><svg><use href="#i-isol"/></svg></button></div>
      <div class="seg"><button class="hl" aria-label="硬件加速"><svg><use href="#i-hw"/></svg></button></div>
      <div class="seg"><button class="cal" aria-label="系统变量监视"><svg><use href="#i-cal"/></svg></button></div>
      <div class="seg"><button aria-label="全屏显示"><svg><use href="#i-full"/></svg></button><button aria-label="自定义"><svg><use href="#i-menu"/></svg></button></div>
    </div>
  </footer>
</div>

<div class="propbar">
  <i class="grip"></i>
  <label class="combo c1"><i class="swatch"></i><select aria-label="颜色控制"><option>ByBlock</option></select></label>
  <label class="combo c2"><i class="ln"></i><select aria-label="线型控制"><option>ByLayer</option></select></label>
  <label class="combo c3"><i class="ln"></i><select aria-label="线宽控制"><option>ByLayer</option></select></label>
  <label class="combo c4"><select aria-label="打印样式控制" disabled><option>ByColor</option></select></label>
  <button aria-label="关闭工具栏"><svg><use href="#i-x"/></svg></button>
</div>

<section class="palette">
  <div class="ptabs">
    <button class="cut"><span>新建 ...</span></button><button class="cut"><span>茶墨...</span></button><button class="cut"><span>图纸...</span></button><button><span>硬装</span></button><button class="on"><span>五金</span></button><button><span>窗帘</span></button><button class="cut"><span>定制...</span></button><button class="cut"><span>饰品...</span></button><button class="cut"><span>填充...</span></button><button class="cut"><span>拆单...</span></button><button class="cut"><span>卫生...</span></button><i></i><i></i><i></i>
  </div>
  <div class="pbody">
    <h2>拉手</h2>
    <ul class="items">
      <li><svg class="th" viewBox="0 0 66 80"><path class="w" d="M1 33h65v14H1zM1 35h6v2h59"/><path fill="#fff" d="M0 32h7v3H0zM0 45h7v3H0z"/><path class="w" stroke-width="3" stroke-dasharray="4 1 2 1" d="M8 40.500h24"/></svg><svg class="bolt"><use href="#i-bolt"/></svg><span>G形拉手</span></li>
      <li><svg class="th" viewBox="0 0 66 80"><path class="w" d="M.5 34.500h65v11H.5z"/><path class="d" d="M5 41.500h61M4.500 41v4"/></svg><svg class="bolt"><use href="#i-bolt"/></svg><span>L型拉手</span></li>
      <li><svg class="th" viewBox="0 0 66 80"><rect class="w" x=".5" y="23.500" width="65" height="33" rx="3"/><rect class="w" x="4.500" y="27.500" width="57" height="25" rx="1"/><path class="w" d="M21.500 24v3M45.500 24v3"/></svg><span>抽屉暗拉手</span></li>
      <li><svg class="th" viewBox="0 0 66 80"><path class="w" d="M.5 28.500h65v23H.5zM2.500 30.500h21v7h40v13h-61z"/></svg><span>抽屉内嵌拉手</span></li>
      <li><svg class="th" viewBox="0 0 66 80"><circle cx="33" cy="40" r="8" class="w"/><circle cx="33" cy="40" r="7" fill="#d8d8d8"/></svg><svg class="bolt"><use href="#i-bolt"/></svg><span>单孔拉手</span></li>
      <li><svg class="th" viewBox="0 0 66 80"><path class="w" d="M27.500 7.500h11v65h-11zM36.500 9v62M27 8.500h12M27 71.500h12"/><path class="d" d="M29.500 9v62"/></svg><svg class="bolt"><use href="#i-bolt"/></svg><span>开槽暗拉手</span></li>
      <li><svg class="th" viewBox="0 0 66 80"><path fill="#fff" d="M0 38h66v2H0z"/><path class="d" d="M21 40.500h24v1H21z"/></svg><svg class="bolt"><use href="#i-bolt"/></svg><span>拇指拉手-横</span></li>
      <li><svg class="th" viewBox="0 0 66 80"><path fill="#c6c9ce" d="M32 8h2v65h-2z"/></svg><svg class="bolt"><use href="#i-bolt"/></svg><span>拇指拉手-竖</span></li>
      <li><svg class="th" viewBox="0 0 66 80"><path class="w" d="M26.500 7.500h13v65h-13z"/><path class="d" d="M28.500 9v62M37.500 9v62M29.500 18.500h7v43h-7z"/></svg><svg class="bolt"><use href="#i-bolt"/></svg><span>榻榻米拉手</span></li>
      <li><svg class="th" viewBox="0 0 66 80"><path fill="#b4b8be" d="M32 7h2v66h-2z"/></svg><svg class="bolt"><use href="#i-bolt"/></svg><span>现代拉手-<wbr>1000</span></li>
      <li><svg class="th" viewBox="0 0 66 80"><path class="w" d="M28.500 7.500h8v65h-8z"/><path class="d" d="M30.500 9v62"/></svg><svg class="bolt"><use href="#i-bolt"/></svg><span>现代拉手-<wbr>128</span></li>
      <li><svg class="th" viewBox="0 0 66 80"><path class="w" d="M28.500 7.500h8v65h-8z"/><path class="d" d="M30.500 9v62"/></svg><svg class="bolt"><use href="#i-bolt"/></svg><span>现代拉手-96</span></li>
      <li class="last"><svg class="th" viewBox="0 0 66 80"><path class="w" d="M27.500 7.500h11v65h-11z"/><path class="d" d="M30.500 9v62M33.500 9v62M35.500 9v62M28 36h10v8H28z"/></svg><svg class="bolt"><use href="#i-bolt"/></svg><span>中式拉手</span></li>
    </ul>
    <h2 class="next">多功能配件</h2>
    <i class="thumb"></i>
  </div>
  <div class="ptitle">
    <button aria-label="关闭"><svg><use href="#i-x"/></svg></button>
    <button aria-label="自动隐藏"><svg><use href="#i-pin"/></svg></button>
    <button aria-label="特性"><svg><use href="#i-gear"/></svg></button>
    <span>工具选项板 - 所有选项板</span>
    <button class="pals" aria-label="选项板列表"><svg><use href="#i-pals"/></svg></button>
  </div>
</section>
<script src="drawing.js"></script>
</body>
</html>
```

FILE: styles.css
```css
:root {
  --dark: #222831;
  --panel: #3c4452;
  --shade: #2e3440;
  --light: #dcdcdc;
  --hl: #5f8fc4;
  --ctl: #e1e1e1;
}
* { box-sizing: border-box; }
body {
  margin: 0;
  min-height: 100vh;
  display: flex;
  flex-direction: column;
  position: relative;
  overflow: hidden;
  background: var(--dark);
  color: #fff;
  font: 15px/20px "Open Sans", "Noto Sans CJK SC", sans-serif;
}
button, input, select { font: inherit; color: inherit; }
button { background: none; border: 0; padding: 0; display: flex; align-items: center; justify-content: center; white-space: nowrap; }
ul, h1, h2, p { margin: 0; padding: 0; font-weight: 400; list-style: none; }
svg { display: block; flex: none; width: 20px; height: 20px; }
.sprite { position: absolute; width: 0; height: 0; }

.f { fill: #dcdcdc; }
.g { fill: #9ea1a7; }
.b { fill: #7cc4f8; }
.k { fill: #2e3440; }
.s { fill: none; stroke: #d3d5d8; }
.sb { fill: none; stroke: #6bb0e6; }
.w2 { stroke-width: 2; }
.w { fill: none; stroke: #fff; }
.d { fill: none; stroke: #8b9098; }
.mini { font: 700 8px "Liberation Sans", sans-serif; fill: #7cc4f8; }

/* title and menu */
.header { display: flex; height: 59px; }
.logo { width: 52px; height: 50px; margin: 4px 0 0 4px; background: linear-gradient(#c9c9c9, #7c7c7c); border: 1px solid #0f1114; }
.logo svg { width: 50px; height: 48px; }
.headrows { flex: 1; display: flex; flex-direction: column; }
.titlerow { display: flex; align-items: center; height: 36px; }
.qat { display: flex; align-items: center; padding-left: 4px; }
.qat button { width: 30px; height: 30px; }
.qat .car, .info .car { width: 16px; color: #b5b8bd; }
.car svg { width: 10px; height: 10px; }
.qat .dim { color: #676c75; }
.qat .cust { width: 20px; }
.cust svg { width: 12px; height: 12px; }
.title { flex: 1; display: flex; justify-content: center; gap: 16px; font-size: 16px; line-height: 34px; height: 36px; }
.info { display: flex; align-items: center; }
.tri { width: 5px; height: 10px; margin-right: 8px; background: #dcdcdc; clip-path: polygon(0 0, 100% 50%, 0 100%); }
.info input { width: 223px; height: 26px; padding: 0 4px; border: 0; background: #464e60; font-size: 14px; font-style: italic; color: #c5c8ce; }
.info input::placeholder { color: #b6b9c0; opacity: 1; }
.info button { width: 30px; }
.info .login { width: 132px; gap: 7px; justify-content: flex-start; padding-left: 6px; }
.info .login + .car { width: 20px; }
.rule { width: 1px; height: 22px; margin: 0 3px 0 13px; background: #4a5262; }
.info .rule + button { margin-right: 1px; }
.info .rule ~ button { position: static; }
.win { display: flex; gap: 15px; padding: 0 11px 6px 21px; }
.win svg { width: 16px; height: 16px; }
.menurow { display: flex; justify-content: space-between; align-items: center; height: 22px; }
.menu { display: flex; gap: 29px; padding-left: 14px; color: #b9bcc2; font-size: 15px; }
.win.doc { gap: 6px; padding: 0 7px 0 0; }

/* window frame */
.frame { flex: 1; display: flex; flex-direction: column; background: var(--panel); padding: 1px 4px 3px; margin-bottom: 1px; }
.ribbon { background: var(--dark); height: 156px; display: flex; flex-direction: column; justify-content: space-between; }
.ribbon p { display: flex; align-items: center; gap: 5px; padding: 5px 0 0 53px; font-size: 18px; line-height: 28px; }
.ribbon p svg { width: 38px; height: 28px; }
.filetabs { display: flex; align-items: flex-end; padding-left: 24px; }
.ftab { width: 154px; height: 28px; padding: 0 16px; justify-content: flex-start; background: var(--shade); color: #b3b6bc; border-radius: 12px 12px 0 0; font-size: 15px; }
.ftab.on { width: 154px; padding: 0 14px 0 15px; justify-content: space-between; background: var(--panel); color: #e4e6e9; }
.ftab svg { width: 14px; height: 14px; }
.ftab .s { stroke: #9a9ea6; }
.fadd { width: 26px; height: 18px; margin: 0 0 4px 9px; background: var(--shade); border-radius: 4px 10px 4px 10px; }
.fadd svg { width: 12px; height: 12px; }

/* docked toolbars */
.bars { display: flex; flex-direction: column; gap: 3px; padding: 5px 0 5px; }
.row { display: flex; gap: 1px; }
.bar { display: flex; align-items: center; height: 30px; border: 1px solid var(--dark); }
.row + .row .bar { height: 29px; }
.bar button { width: 29px; height: 28px; }
.bar .t26 { width: 26px; }
.bar .car { width: 17px; color: #dcdcdc; }
.bar .arrow { color: #c9ccd1; }
.grip { width: 5px; height: 18px; margin: 0 4px 0 3px; background: radial-gradient(circle, #c5c8ce 34%, transparent 36%) 0 0 / 3px 3px; }
.bar:not(:first-child) .grip { margin-right: 1px; }
.sep { width: 2px; height: 24px; margin: 0 2px 0 3px; background: linear-gradient(90deg, #14171c 50%, #dfe1e4 50%); }
.combo { display: flex; align-items: center; height: 28px; background: var(--ctl); border: 1px solid #b6b8bc; color: #111; }
.combo select {
  flex: 1; min-width: 0; height: 24px; border: 0; padding: 0 24px 0 0; appearance: none; opacity: 1; color: #111;
  background: url("data:image/svg+xml,%3Csvg xmlns='http://www.w3.org/2000/svg' width='10' height='6'%3E%3Cpath d='M1 1l4 4 4-4' fill='none' stroke='%23555'/%3E%3C/svg%3E") no-repeat right 4px center;
}
.swatch { width: 18px; height: 18px; background: #fff; border: 1px solid #000; margin: 0 4px 0 2px; }
.ln { width: 75px; height: 1px; background: #000; margin: 0 7px 0 6px; }
.std { width: 150px; padding-left: 23px; }
.back { width: 150px; margin-left: 35px; }
.space { width: 219px; margin-left: 12px; }
.combo.layer { width: 375px; height: 25px; padding-left: 3px; margin-right: 1px; }
.layer svg { margin-right: 4px; }
.layer .swatch { margin: 0 5px 0 0; width: 16px; height: 16px; }

.propbar { position: absolute; left: 192px; top: 225px; display: flex; gap: 6px; align-items: center; height: 30px; padding-right: 1px; background: var(--panel); border: 1px solid var(--dark); }
.propbar .grip { margin: 0 -3px 0 2px; }
.propbar .combo { height: 26px; }
.c1 { width: 187px; }
.c2 { width: 201px; }
.c3 { width: 156px; }
.c3 .ln { width: 44px; margin-right: 6px; }
.c4 { width: 150px; padding-left: 12px; background: #cacaca; }
.c4 select { color: #7d7d7d; }
.propbar button { width: 8px; align-self: flex-start; margin: 4px 0 0 -4px; }
.propbar button svg { width: 10px; height: 10px; }

/* work area */
.work { flex: 1; display: flex; min-height: 0; }
.recovery { width: 277px; display: flex; flex-direction: column; padding: 3px 0 5px; }
.recovery h2 { height: 28px; padding: 3px 0 0 19px; border-radius: 5px; font-size: 15px; line-height: 20px; background: radial-gradient(circle, #aaadb3 34%, transparent 36%) 8px 8px / 3px 3px no-repeat, var(--shade); }
.head { height: 29px; padding: 0 9px 1px 11px; justify-content: space-between; background: var(--shade); border: 1px solid var(--dark); border-radius: 4px; font-weight: 700; font-size: 15px; }
.head i { width: 10px; height: 5px; background: #dcdcdc; clip-path: polygon(0 0, 100% 0, 50% 100%); }
.files { display: flex; height: 166px; overflow: hidden; border-left: 1px solid var(--dark); border-right: 1px solid var(--dark); }
.files ul { flex: 1; overflow: hidden; padding: 1px 0 0 8px; background: linear-gradient(#aeb2b9 50%, transparent 50%) 13px 0 / 1px 4px repeat-y; }
.files li { display: flex; align-items: center; height: 22px; font-size: 15px; white-space: nowrap; }
.files li button { width: 11px; height: 11px; border: 1px solid #9a9da3; background: #f4f4f4; color: #2846a0; font-size: 12px; line-height: 9px; }
.files li svg { width: 20px; height: 14px; margin: 0 4px 0 7px; }
.scroll { width: 21px; background: #f0f0f0; display: flex; flex-direction: column; align-items: center; }
.scroll b { width: 19px; height: 21px; background: #cdcdcd; margin-bottom: auto; }
.scroll i { width: 8px; height: 8px; border: solid #555; border-width: 2px 0 0 2px; transform: rotate(45deg); margin: 9px 0 5px; }
.scroll .down { transform: rotate(225deg); margin: 5px 0 9px; }
.split { height: 11px; display: flex; justify-content: center; align-items: center; gap: 3px; background: var(--shade); border: 1px solid var(--dark); border-radius: 4px; }
.split i { width: 3px; height: 3px; background: #dcdcdc; }
.pane { height: 123px; border: 1px solid var(--dark); }
.details { flex: 1; height: auto; }

.vbar { width: 31px; display: flex; flex-direction: column; align-items: center; border: 1px solid var(--dark); align-self: flex-start; }
.recovery + .vbar { margin: 0 4px 0 3px; }
.vbar button { width: 29px; height: 28px; padding-right: 1px; }
.hgrip { width: 18px; height: 6px; margin: 3px 0 1px; background: radial-gradient(circle, #c5c8ce 34%, transparent 36%) 0 0 / 3px 3px; }
.hsep { width: 25px; height: 2px; margin: 3px 0; background: #e6e7e9; }
.canvas { flex: 1; position: relative; min-width: 0; overflow: hidden; background: #212830; }
.canvas svg { position: absolute; left: 0; top: 0; width: 100%; height: 100%; }
.view { padding: 4px 0 0 4px; font-size: 16px; line-height: 22px; color: #e6e6e6; }
.ucs { font: 300 22px "Open Sans", sans-serif; fill: #f2f2f2; }
.right { width: 35px; display: flex; flex-direction: column; gap: 2px; margin-left: 3px; }
.right .vbar:last-child { height: 182px; overflow: hidden; border-bottom: 0; }
.right .vbar button { flex: none; }

/* bottom bar */
.foot { height: 36px; display: flex; justify-content: space-between; background: var(--dark); border-top: 1px solid #4a505b; }
.ltabs { display: flex; padding-left: 13px; align-items: flex-start; }
.ltabs button { height: 21px; width: 62px; margin-right: 2px; padding-bottom: 1px; background: #2c333f; color: #aeb2b9; border-radius: 0 0 8px 8px; font-size: 15px; }
.ltabs .on { background: var(--panel); color: #fff; font-weight: 700; }
.ltabs .add { width: 27px; height: 19px; margin: 2px 0 0 6px; border-radius: 8px 2px 8px 2px; }
.ltabs .add svg { width: 12px; height: 12px; }
.status { display: flex; gap: 2px; padding: 1px 1px 0 0; height: 31px; }
.seg, .coord, .space-btn { display: flex; background: var(--panel); height: 30px; }
.status .coord { width: 262px; justify-content: flex-end; padding-right: 6px; font-size: 14px; }
.status .space-btn { width: 34px; margin: 0 1px; font-weight: 500; }
.seg button { width: 30px; height: 30px; }
.seg .car { width: 20px; color: #dcdcdc; }
.seg .hl { background: var(--hl); border: 1px solid var(--dark); }
.seg .ratio { width: 26px; padding-left: 4px; font-size: 14px; }
.seg .ratio + .car { width: 16px; }
.seg .cal { width: 35px; }
.cal svg { width: 26px; height: 26px; }

/* tool palette */
.palette { position: absolute; right: 45px; top: 242px; bottom: 43px; width: 548px; display: flex; }
.ptabs { width: 28px; margin-top: 4px; position: relative; }
.ptabs button { width: 29px; height: 63px; background: var(--shade); border: 1px solid var(--dark); border-width: 0 1px 2px 1px; border-radius: 6px 0 0 6px; color: #b3b6bc; }
.ptabs .cut { padding-top: 9px; }
.ptabs .on { background: var(--panel); color: #fff; border-right-color: var(--panel); }
.ptabs span, .ptitle span { writing-mode: vertical-rl; text-orientation: sideways; transform: rotate(180deg); font-size: 15px; line-height: 20px; }
.ptabs i { display: block; height: 5px; background: var(--shade); border-bottom: 1px solid var(--dark); }
.pbody { flex: 1; position: relative; margin: 4px 0 4px; padding: 22px 21px 0 12px; background: var(--panel); border: 1px solid var(--dark); border-radius: 6px; box-shadow: 0 0 0 4px var(--shade); display: flex; flex-direction: column; }
.pbody h2 { font-size: 15px; color: #b9bcc2; }
.items { display: grid; grid-template-columns: repeat(4, 100px); grid-auto-rows: 152px; justify-content: end; padding: 27px 0 9px; border-bottom: 1px solid #2b313c; }
.items li { display: flex; flex-direction: column; align-items: center; position: relative; text-align: center; }
.th { width: 66px; height: 80px; }
.bolt { position: absolute; left: 71px; top: 61px; }
.items span { width: 84px; margin-top: 11px; font-size: 15px; line-height: 19px; }
.items .last { grid-column: 4; }
.pbody .next { height: 10px; overflow: hidden; margin-top: 29px; }
.thumb { position: absolute; right: 6px; top: 14px; width: 7px; height: 127px; border-radius: 4px; background: #2b313c; }
.ptitle { width: 29px; display: flex; flex-direction: column; align-items: center; background: var(--shade); border-radius: 0 6px 6px 0; padding: 2px 0 3px; position: relative; }
.ptitle button { width: 24px; height: 24px; }
.ptitle svg { width: 12px; height: 12px; }
.ptitle span { margin-top: auto; color: #c2c5ca; }
.ptitle .pals { margin-top: 12px; }
.ptitle .pals svg { width: 18px; height: 18px; }
```

FILE: drawing.js
```javascript
// Model space contents: sheets of door elevations, drawn in screen units.
// Every elevation is placed by the middle line of its title strip.
const ORIGIN = { x: 319, y: 288 };
const layers = {};
let seed = 7;
const rnd = n => { seed = (seed * 1103515245 + 12345) % 2147483648; return Math.floor(seed / 2147483648 * n); };
const box = (c, x, y, w, h) => { (layers[c] = layers[c] || []).push(`M${x} ${y}h${w}v${h}h${-w}z`); };

const WHITE = '#f4f4f4', PALE = '#c6c7cc', GREY = '#8f9398', GREEN = '#00e000', DEEP = '#009a10', BLUE = '#0a6c96';

function title(x, y) {
  box(WHITE, x, y - 3, 8, 1);
  box(WHITE, x, y - 3, 2, 3);
  box('#b2b4b8', x + 1, y - 1, 38, 3);
  box(WHITE, x + 1, y, 28, 1);
  for (let i = 3; i < 38; i += 3 + rnd(3)) box(WHITE, x + i, y - 1, 2, 3);
  box(GREY, x + 38, y + 24, 3, 1);
  box(GREY, x + 38, y + 24, 1, 3);
}

function leaf(x, y, w, h, edge, fill) {
  if (fill) box(fill, x + 1, y + 1, w - 2, h - 2);
  box(PALE, x, y, 3, h);
  box(edge || WHITE, x + w - 2, y, 2, h);
  box(WHITE, x, y, w, 2);
  box(WHITE, x, y + h - 2, w, 2);
}

function leaders(x, end, y, n) {
  for (let i = 0; i < n; i++) box(i % 2 ? GREY : PALE, x, y + i * 3, Math.max(4, end - x - rnd(8)), 1);
}

function single(x, y, w, side) {
  title(x, y);
  const l = x + 6;
  box(GREEN, x + 2, y + 2, 1, 15);
  box(side || DEEP, x + 3, y + 3, 2, 17);
  box(PALE, x + 5, y + 3, 1, 18);
  leaf(l, y + 4, w, 17);
  for (let i = 5; i < w - 3; i += 5) box(i % 2 ? WHITE : PALE, l + i, y + 5, 2, 15);
  box(WHITE, l + 2, y + 12, w - 3, 1);
  box(WHITE, l + w, y + 8, 3, 1);
  leaders(l + w, x + 38, y + 5, 5);
  box(GREEN, x + 7, y + 21, w - 1, 1);
  box(rnd(4) ? GREEN : '#d22', x + 8 + rnd(5), y + 22, 6, 1);
  box(WHITE, x + 14, y + 22, 4, 1);
  if (rnd(2)) box(rnd(2) ? '#e4d600' : '#d22', x + 4, y + 2, 2, 2);
  if (w < 12) { box(GREEN, x + 24, y + 20, 12, 1); box(PALE, x + 25, y + 18, 8, 3); box(GREEN, x + 10, y + 20, 10, 2); }
}

function double(x, y, edge, fill) {
  title(x, y);
  for (const dx of [0, 20]) {
    box(GREEN, x + 1 + dx, y + 2, 1, 17);
    box(DEEP, x + 2 + dx, y + 2, 2, 17);
    leaf(x + 4 + dx, y + 3, 8, 18, edge, fill);
    leaders(x + 12 + dx, x + 20 + dx, y + 4, 5);
    box(GREY, x + 19 + dx, y + 3, 1, 18);
    box(GREEN, x + 5 + dx, y + 20, 7, 2);
    if (edge) box(GREEN, x + 2 + dx, y + 22, 13, 1);
  }
}

function striped(x, y) {
  title(x, y);
  box('#d000d0', x + 7, y + 5, 20, 17);
  for (let i = 0; i < 20; i += 5) box('#8c1030', x + 9 + i, y + 5, 2, 16);
  box('#e4d600', x + 7, y + 3, 20, 2);
  box('#e02020', x + 6, y + 20, 22, 2);
  box(WHITE, x + 5, y + 3, 2, 18);
  box(WHITE, x + 27, y + 3, 1, 18);
  box(GREEN, x + 2, y + 2, 1, 18);
  box('#00b8b0', x + 6, y + 22, 20, 1);
  box(GREEN, x + 5, y + 24, 19, 1);
  leaders(x + 28, x + 38, y + 6, 5);
}

// Left column: doors in pairs, two of them single leaf.
for (const y of [338, 410, 487, 522, 556, 591, 624, 658]) double(397, y);
for (const y of [372, 448]) single(397, y, 12);

// Rows of the two wide sheets: y, then x and leaf width of each door.
const sheetA = [
  [342, 466, 11, 525, 11, 589, 11, 647, 11], [380, 466, 16, 525, 16, 589, 16],
  [414, 466, 13, 525, 13, 589, 13, 647, 13], [450, 466, 15, 525, 15],
  [487, 466, 23, 525, 24, 589, 24], [562, 466, 18, 647, 18],
  [596, 466, 15, 519, 15, 581, 15, 647, 15], [629, 466, 25],
  [661, 466, 19, 525, 19, 589, 19, 648, 20],
  [704, 466, 11], [740, 466, 16], [775, 466, 13], [811, 466, 15], [848, 466, 23], [884, 466, 18]
];
const sheetB = [
  [343, 768, 9, 828, 10, 881, 10, 943, 9], [381, 768, 13, 828, 14, 881, 15],
  [419, 768, 14, 828, 15, 881, 15, 932, 14], [454, 768, 18, 828, 18],
  [489, 768, 22, 828, 23, 881, 23], [561, 768, 16, 929, 16],
  [597, 768, 18, 828, 18, 881, 20, 929, 18], [631, 768, 24],
  [663, 768, 24, 826, 24, 877, 24, 929, 22],
  [704, 768, 13], [741, 768, 14], [778, 768, 14], [813, 768, 17], [848, 768, 20], [885, 768, 22]
];
for (const [y, ...c] of sheetA) for (let i = 0; i < c.length; i += 2) single(c[i], y, c[i + 1]);
for (const [y, ...c] of sheetB) for (let i = 0; i < c.length; i += 2) single(c[i], y, c[i + 1], BLUE);

// Tags beside the bottom rows.
for (const x of [520, 839]) {
  const tags = [[3, 704, 4], [3, 711, 2], [0, 746, 8], [0, 780, 2], [0, 785, 4], [0, 817, 8], [0, 856, 6], [0, 889, 4], [0, 896, 2]];
  for (const [dx, y, h] of tags) {
    box('#00ff00', x + dx, y, 11, h);
    if (h > 2) box('#00ff00', x + dx + 9, y + 1, 3, h - 3);
  }
}

// Coloured sheets on the right.
for (const x of [997, 1041]) { double(x, 338, '#0fb5bf', '#0b4b5c'); double(x, 371, '#0fb5bf', '#a89c10'); }
for (const x of [1101, 1152, 1199]) double(x, 337, '#c83a3a');
for (const x of [1101, 1152, 1203]) { single(x, 372, 13); striped(x, 405); }
for (const y of [337, 372, 405]) single(1316, y, 14);
title(1254, 405);
for (const y of [411, 420]) {
  box(GREEN, 1256, y, 24, 1); box(GREEN, 1258, y + 4, 20, 1);
  box('#d22', 1257, y + 1, 5, 2); box('#0fb5bf', 1264, y + 1, 5, 2); box('#d22', 1272, y + 2, 6, 2);
}
box(GREEN, 1103, 314, 1, 5); box(WHITE, 1105, 313, 4, 3); box(WHITE, 1106, 316, 2, 3);

// Sheet name blocks.
for (const [x, w] of [[410, 7], [564, 14], [866, 14], [1012, 11], [1167, 11]]) box('#ffffff', x, 326, w, 5);

const parts = Object.entries(layers).map(([c, d]) => `<path fill="${c}" d="${d.join('')}"/>`).join('');
document.getElementById('model').innerHTML = `
<g transform="translate(${-ORIGIN.x} ${-ORIGIN.y})" shape-rendering="crispEdges">
  <path fill="none" stroke="#d8dadc" d="M384.5 692.500V325.500H991.500V912.500H449.500V325.500M384.500 692.500H449.500M755.500 325.500V912.500M991.500 325.500h91v74h-91M1400 325.500H1095.500v108H1400M1302.500 325.500v108"/>
  <path fill="none" stroke="#e6e6e6" stroke-dasharray="4 2" d="M449 555.500h542M449 692.500h542"/>
  ${parts}
  <path fill="#000" stroke="#00b400" stroke-width="2" d="M419 327h5v5h-5z"/>
  <path fill="none" stroke="#f2f2f2" d="M337.500 907v62h63M332.500 963.500h11v11h-11z"/>
  <text class="ucs" x="340" y="903">Y</text><text class="ucs" x="405" y="968">X</text>
</g>`;
```
